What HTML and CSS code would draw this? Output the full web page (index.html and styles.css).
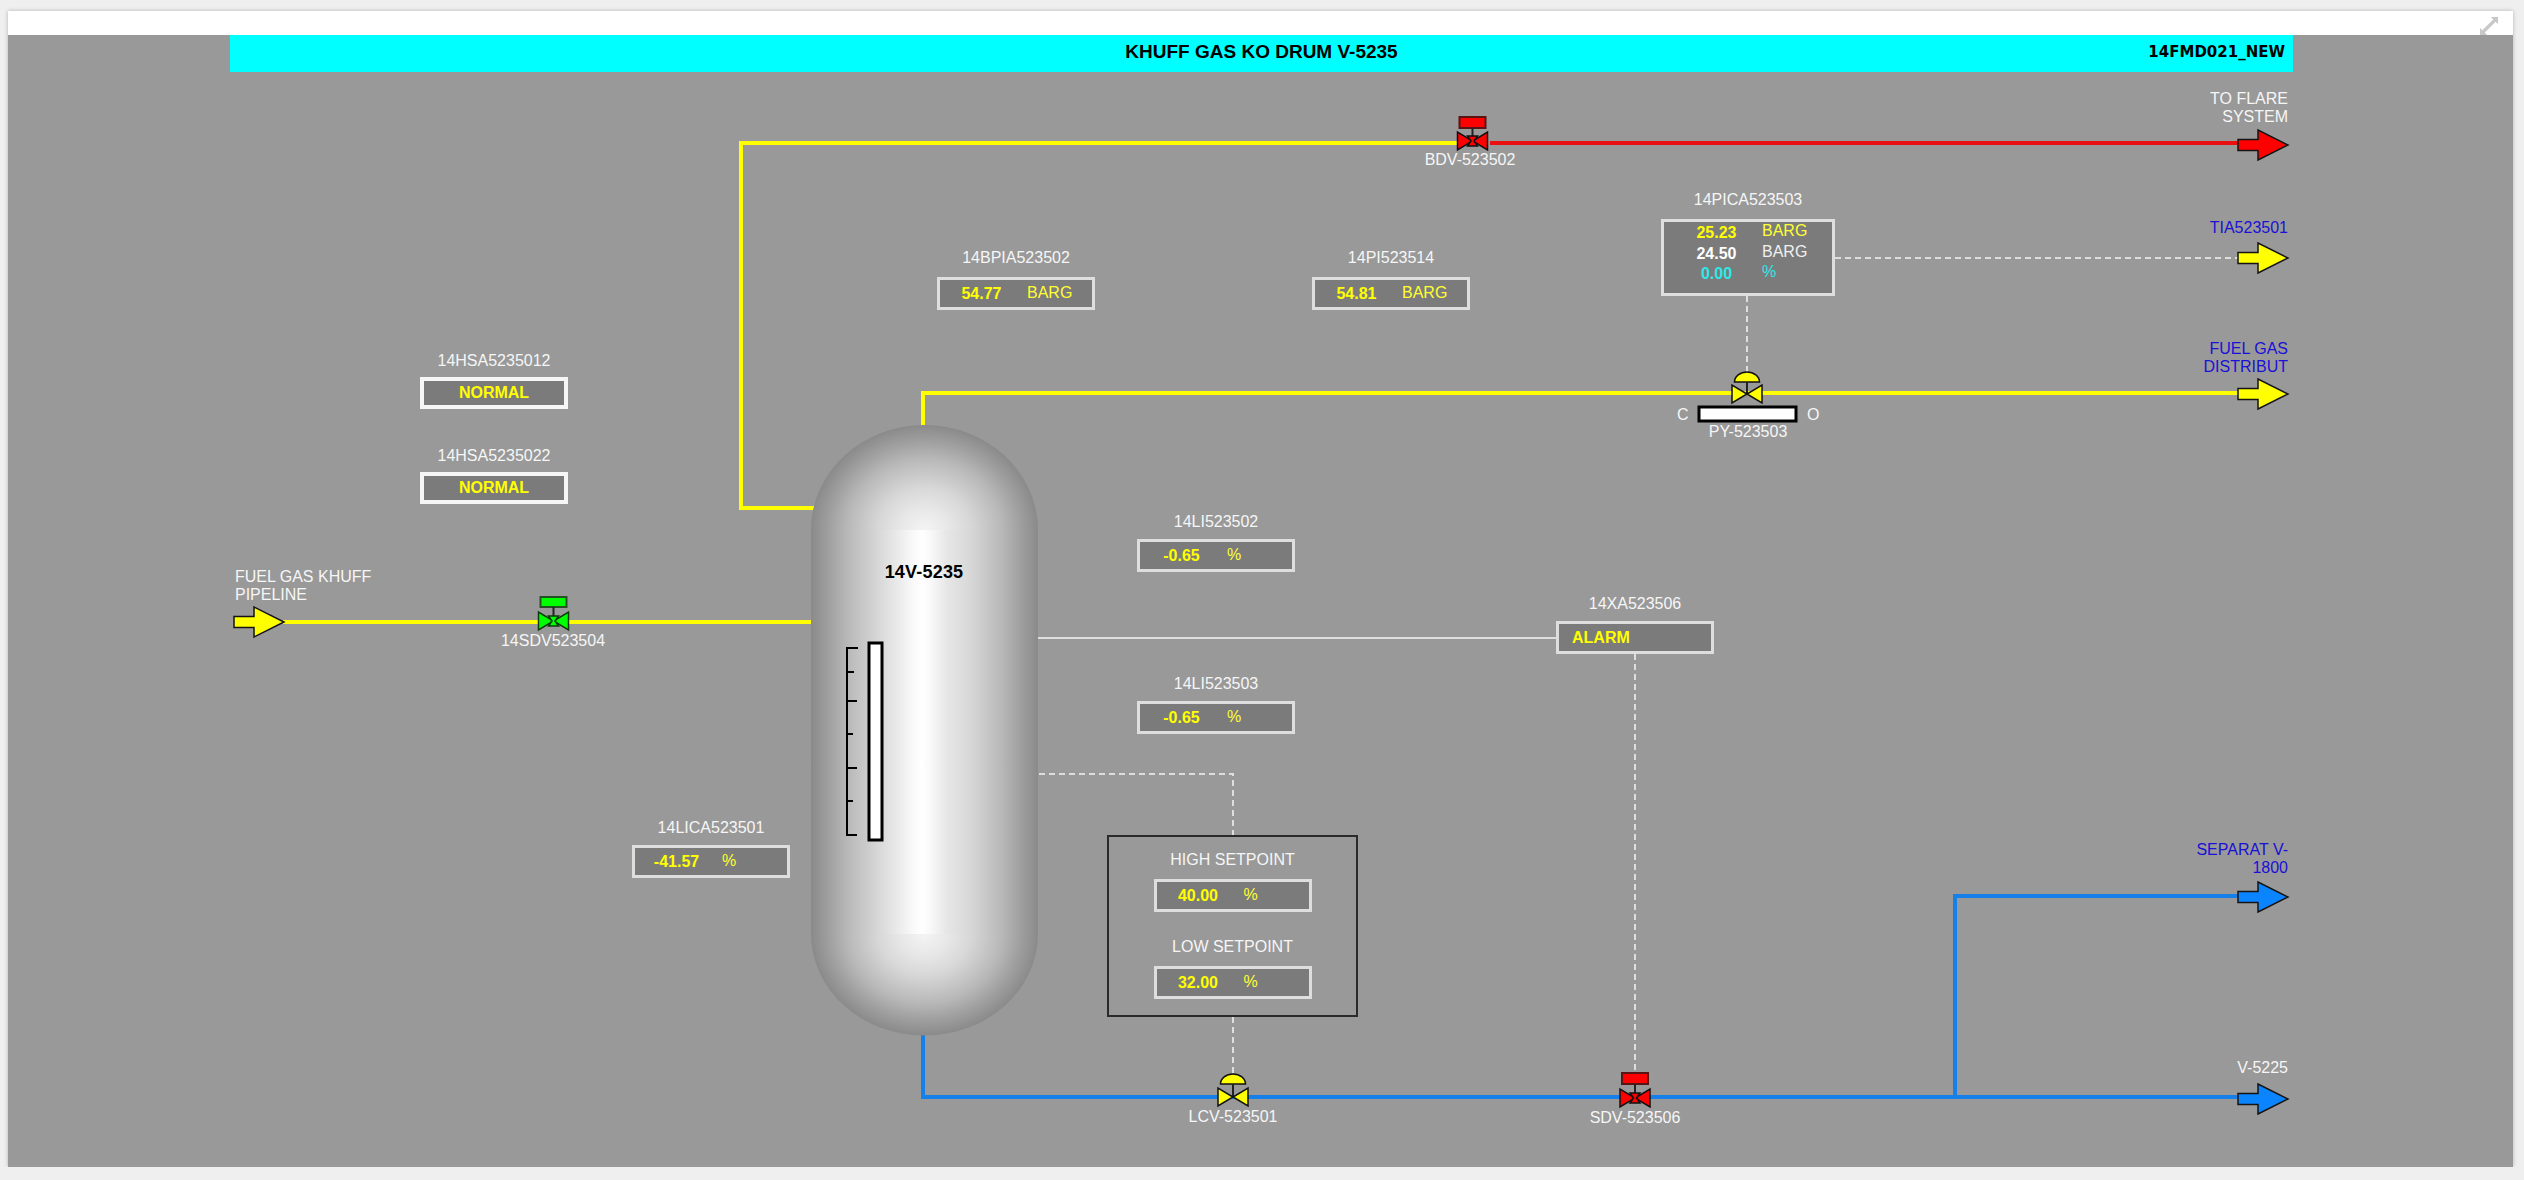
FILE: index.html
```html
<!DOCTYPE html>
<html lang="en">
<head>
  <meta charset="UTF-8">
  <title>KHUFF GAS KO DRUM V-5235</title>
  <link rel="stylesheet" href="styles.css">
</head>
<body>
  <div class="panel">
    <div class="panel-head">
      <svg class="expand-icon" width="18" height="18" viewBox="0 0 18 18">
        <path d="M11 0 H18 V7 L15.6 4.8 L4.8 15.6 L7 18 H0 V11 L2.4 13.2 L13.2 2.4 Z" fill="#c8c8c8"/>
      </svg>
    </div>

    <div class="canvas">
      <div class="banner">
        <span></span>
        <span class="banner-title">KHUFF GAS KO DRUM V-5235</span>
        <span class="banner-id">14FMD021_NEW</span>
      </div>

      <!-- pipes, vessel and valves, drawn in page coordinates -->
      <svg class="schematic" width="2505" height="1132" viewBox="8 35 2505 1132">
        <defs>
          <linearGradient id="shell">
            <stop offset="0" stop-color="#8a8a8a"/>
            <stop offset="0.08" stop-color="#a0a0a0"/>
            <stop offset="0.16" stop-color="#b8b8b8"/>
            <stop offset="0.3" stop-color="#d8d8d8"/>
            <stop offset="0.4" stop-color="#eeeeee"/>
            <stop offset="0.46" stop-color="#fbfbfb"/>
            <stop offset="0.49" stop-color="#ffffff"/>
            <stop offset="0.53" stop-color="#f8f8f8"/>
            <stop offset="0.6" stop-color="#e6e6e6"/>
            <stop offset="0.7" stop-color="#d8d8d8"/>
            <stop offset="0.84" stop-color="#b8b8b8"/>
            <stop offset="0.92" stop-color="#a0a0a0"/>
            <stop offset="1" stop-color="#8a8a8a"/>
          </linearGradient>
          <radialGradient id="cap">
            <stop offset="0" stop-color="#f4f4f4"/>
            <stop offset="0.2" stop-color="#e8e8e8"/>
            <stop offset="0.4" stop-color="#d8d8d8"/>
            <stop offset="0.68" stop-color="#b8b8b8"/>
            <stop offset="0.84" stop-color="#a0a0a0"/>
            <stop offset="1" stop-color="#8a8a8a"/>
          </radialGradient>
          <polygon id="arrow" points="-50,-5.5 -30,-5.5 -30,-15 0,0 -30,15 -30,5.5 -50,5.5"/>
          <g id="body">
            <polygon points="-15,-9 -15,9 0,0"/>
            <polygon points="15,-9 15,9 0,0"/>
          </g>
          <polygon id="plug" points="-5,-5 5,-5 1.5,0 5,5 -5,5 -1.5,0"/>
        </defs>

        <!-- pipes -->
        <g class="pipe pipe-yellow">
          <path d="M815 508 H741 V143 H1457"/>
          <path d="M923 425 V393 H2240"/>
          <path d="M283 622 H811"/>
        </g>
        <path class="pipe pipe-red" d="M1490 143 H2240"/>
        <g class="pipe pipe-blue">
          <path d="M923 1035 V1097 H2240"/>
          <path d="M1955 1097 V896 H2240"/>
        </g>

        <!-- signal lines -->
        <path class="signal" d="M1038 638 H1556"/>
        <g class="signal signal-dash">
          <path d="M1835 258 H2238"/>
          <path d="M1747 296 V372"/>
          <path d="M1039 774 H1233 V835"/>
          <path d="M1233 1017 V1074"/>
          <path d="M1635 654 V1072"/>
        </g>

        <!-- vessel -->
        <ellipse cx="924.5" cy="530" rx="113.5" ry="105" fill="url(#cap)"/>
        <ellipse cx="924.5" cy="934" rx="113.5" ry="101.5" fill="url(#cap)"/>
        <rect x="811" y="530" width="227" height="404" fill="url(#shell)"/>

        <!-- level gauge -->
        <path class="gauge" d="M858 648 H847 V835 H857 M847 672 H854 M847 701 H857 M847 734 H853 M847 768 H857 M847 801 H853"/>
        <rect class="gauge-bar" x="869" y="643" width="13" height="197"/>

        <!-- end arrows -->
        <use href="#arrow" class="arrow arrow-red" x="2288" y="145"/>
        <use href="#arrow" class="arrow arrow-yellow" x="2288" y="258"/>
        <use href="#arrow" class="arrow arrow-yellow" x="2288" y="394"/>
        <use href="#arrow" class="arrow arrow-blue" x="2288" y="897"/>
        <use href="#arrow" class="arrow arrow-blue" x="2288" y="1099"/>
        <use href="#arrow" class="arrow arrow-yellow" x="284" y="622"/>

        <!-- on/off valves -->
        <g class="valve valve-red" transform="translate(1472.5 141)">
          <rect class="actuator" x="-13" y="-24" width="26" height="11"/>
          <path class="stem" d="M0 -13 V0"/>
          <use href="#body"/>
          <use href="#plug"/>
        </g>
        <g class="valve valve-red" transform="translate(1635 1098)">
          <rect class="actuator" x="-13" y="-25" width="26" height="11"/>
          <path class="stem" d="M0 -14 V0"/>
          <use href="#body"/>
          <use href="#plug"/>
        </g>
        <g class="valve valve-green" transform="translate(553.5 621)">
          <rect class="actuator" x="-13" y="-24" width="26" height="10"/>
          <path class="stem" d="M0 -14 V0"/>
          <use href="#body"/>
          <use href="#plug"/>
        </g>

        <!-- control valves -->
        <g class="valve valve-yellow" transform="translate(1747 394)">
          <path d="M-12.5 -12 A12.5 10 0 0 1 12.5 -12 Z"/>
          <path class="stem" d="M0 -12 V0"/>
          <use href="#body"/>
        </g>
        <g class="valve valve-yellow" transform="translate(1233 1097)">
          <path d="M-12.5 -13 A12.5 10 0 0 1 12.5 -13 Z"/>
          <path class="stem" d="M0 -13 V0"/>
          <use href="#body"/>
        </g>

        <!-- PY position bar -->
        <rect class="gauge-bar" x="1699" y="407" width="97" height="14"/>
      </svg>

      <!-- free text on the schematic -->
      <div class="note note-right note-flare">TO FLARE<br>SYSTEM</div>
      <div class="note note-right note-blue note-tia">TIA523501</div>
      <div class="note note-right note-blue note-fuel">FUEL GAS<br>DISTRIBUT</div>
      <div class="note note-right note-blue note-sep">SEPARAT V-<br>1800</div>
      <div class="note note-right note-v5225">V-5225</div>
      <div class="note note-khuff">FUEL GAS KHUFF<br>PIPELINE</div>
      <div class="note note-center note-bdv">BDV-523502</div>
      <div class="note note-center note-py">PY-523503</div>
      <div class="note note-c">C</div>
      <div class="note note-o">O</div>
      <div class="note note-center note-lcv">LCV-523501</div>
      <div class="note note-center note-sdv">SDV-523506</div>
      <div class="note note-center note-sdv14">14SDV523504</div>
      <div class="note note-center note-vessel">14V-5235</div>

      <!-- readouts -->
      <div class="tag tag-bpia">
        <div class="tag-label">14BPIA523502</div>
        <div class="readout"><span class="val">54.77</span><span class="unit">BARG</span></div>
      </div>
      <div class="tag tag-pi">
        <div class="tag-label">14PI523514</div>
        <div class="readout"><span class="val">54.81</span><span class="unit">BARG</span></div>
      </div>
      <div class="tag tag-pica">
        <div class="tag-label">14PICA523503</div>
        <div class="readout-multi">
          <span class="val">25.23</span><span class="unit">BARG</span>
          <span class="val val-white">24.50</span><span class="unit unit-white">BARG</span>
          <span class="val val-cyan">0.00</span><span class="unit unit-cyan">%</span>
        </div>
      </div>
      <div class="tag tag-hsa1">
        <div class="tag-label">14HSA5235012</div>
        <div class="status">NORMAL</div>
      </div>
      <div class="tag tag-hsa2">
        <div class="tag-label">14HSA5235022</div>
        <div class="status">NORMAL</div>
      </div>
      <div class="tag tag-li2">
        <div class="tag-label">14LI523502</div>
        <div class="readout"><span class="val">-0.65</span><span class="unit">%</span></div>
      </div>
      <div class="tag tag-li3">
        <div class="tag-label">14LI523503</div>
        <div class="readout"><span class="val">-0.65</span><span class="unit">%</span></div>
      </div>
      <div class="tag tag-lica">
        <div class="tag-label">14LICA523501</div>
        <div class="readout"><span class="val">-41.57</span><span class="unit">%</span></div>
      </div>
      <div class="tag tag-xa">
        <div class="tag-label">14XA523506</div>
        <div class="readout readout-alarm"><span class="val">ALARM</span></div>
      </div>

      <div class="setpoints">
        <div class="tag-flow">
          <div class="tag-label">HIGH SETPOINT</div>
          <div class="readout"><span class="val">40.00</span><span class="unit">%</span></div>
        </div>
        <div class="tag-flow">
          <div class="tag-label">LOW SETPOINT</div>
          <div class="readout"><span class="val">32.00</span><span class="unit">%</span></div>
        </div>
      </div>
    </div>
  </div>
</body>
</html>
```

FILE: styles.css
```css
body {
  margin: 0;
  background-color: #efefef;
  font-family: "Liberation Sans", Arial, sans-serif;
  font-size: 16px;
  line-height: 18px;
  color: #f6f6f6;
}

.panel {
  width: 2505px;
  margin: 11px 0 0 8px;
  background-color: #fff;
  box-shadow: 0 0 4px rgba(0, 0, 0, 0.25);
}

.panel-head {
  height: 24px;
  display: flex;
  justify-content: flex-end;
  align-items: flex-end;
  padding-right: 15px;
}

.expand-icon {
  display: block;
}

.canvas {
  position: relative;
  height: 1132px;
  background-color: #999;
  overflow: hidden;
}

.banner {
  position: relative;
  z-index: 1;
  width: 2063px;
  height: 37px;
  box-sizing: border-box;
  padding-bottom: 3px;
  margin-left: 222px;
  background-color: #0ff;
  color: #000;
  font-weight: bold;
  display: grid;
  grid-template-columns: 1fr auto 1fr;
  align-items: center;
}

.banner-title {
  font-size: 19px;
}

.banner-id {
  justify-self: end;
  margin-right: 8px;
  font-family: "DejaVu Sans", sans-serif;
  font-size: 15px;
}

.schematic {
  position: absolute;
  top: 0;
  left: 0;
}

/* pipes */
.pipe {
  fill: none;
  stroke-width: 4;
}

.pipe-yellow { stroke: #ffff00; }
.pipe-red { stroke: #e81010; }
.pipe-blue { stroke: #1680ea; }

.signal {
  fill: none;
  stroke: #dedede;
  stroke-width: 2;
}

.signal-dash {
  stroke-dasharray: 6 4;
}

.gauge {
  fill: none;
  stroke: #000;
  stroke-width: 2;
}

.gauge-bar {
  fill: #fff;
  stroke: #000;
  stroke-width: 3;
}

.arrow {
  stroke: #141414;
  stroke-width: 1.5;
}

.arrow-red { fill: #ff0000; }
.arrow-yellow { fill: #ffff00; }
.arrow-blue { fill: #0a85ff; }

.valve {
  stroke: #111;
  stroke-width: 1.5;
}

.valve-red { fill: #ff0000; }
.valve-green { fill: #00ff00; }
.valve-yellow { fill: #ffff00; }

.valve-red .actuator { stroke: #5a1414; stroke-width: 2; }
.valve-green .actuator { stroke: #245224; stroke-width: 2; }
.valve-green { stroke: #0c3c0c; }

.stem {
  fill: none;
  stroke: #222;
  stroke-width: 2;
}

/* free text */
.note {
  position: absolute;
  white-space: nowrap;
}

.note-right { right: 225px; text-align: right; }
.note-center { width: 120px; text-align: center; }
.note-blue { color: #1a10d6; }

.note-flare { top: 55px; }
.note-tia { top: 184px; }
.note-fuel { top: 305px; }
.note-sep { top: 806px; }
.note-v5225 { top: 1024px; }
.note-khuff { left: 227px; top: 533px; }
.note-bdv { left: 1402px; top: 116px; }
.note-py { left: 1680px; top: 388px; }
.note-c { left: 1669px; top: 371px; }
.note-o { left: 1799px; top: 371px; }
.note-lcv { left: 1165px; top: 1073px; }
.note-sdv { left: 1567px; top: 1074px; }
.note-sdv14 { left: 485px; top: 597px; }

.note-vessel {
  left: 856px;
  top: 528px;
  color: #000;
  font-size: 18px;
  font-weight: bold;
  letter-spacing: 0.2px;
}

/* readouts */
.tag {
  position: absolute;
  display: flex;
  flex-direction: column;
  align-items: center;
  gap: 10px;
}

.tag-flow {
  display: flex;
  flex-direction: column;
  align-items: center;
  gap: 10px;
}

.tag-bpia { left: 929px; top: 214px; }
.tag-pi { left: 1304px; top: 214px; }
.tag-pica { left: 1653px; top: 156px; }
.tag-hsa1 { left: 412px; top: 317px; gap: 7px; }
.tag-hsa2 { left: 412px; top: 412px; gap: 7px; }
.tag-li2 { left: 1129px; top: 478px; gap: 8px; }
.tag-li3 { left: 1129px; top: 640px; gap: 8px; }
.tag-lica { left: 624px; top: 784px; gap: 8px; }
.tag-xa { left: 1548px; top: 560px; gap: 8px; }

.readout {
  width: 158px;
  height: 33px;
  box-sizing: border-box;
  border: 3px solid #dedede;
  background-color: #7b7b7b;
  display: flex;
  align-items: center;
}

.readout .val {
  width: 83px;
  text-align: center;
}

.readout .unit {
  margin-left: 4px;
  position: relative;
  top: -1px;
}

.readout-alarm {
  padding-left: 13px;
}

.readout-alarm .val {
  width: auto;
}

.readout-multi {
  width: 174px;
  height: 77px;
  box-sizing: border-box;
  border: 3px solid #dedede;
  background-color: #7b7b7b;
  padding: 1px 0 0 7px;
  display: grid;
  grid-template-columns: 91px auto;
  grid-auto-rows: 20.5px;
  align-items: center;
  justify-content: start;
}

.readout-multi .val {
  text-align: center;
}

.readout-multi .unit {
  position: relative;
  top: -2px;
}

.val {
  color: #ffff00;
  font-weight: bold;
}

.unit {
  color: #ffff33;
}

.val-white { color: #fff; }
.unit-white { color: #f0f0f0; }
.val-cyan { color: #2ee8e8; }
.unit-cyan { color: #2ee8e8; }

.status {
  width: 148px;
  height: 32px;
  box-sizing: border-box;
  border: 4px solid #f6f6f6;
  background-color: #7b7b7b;
  color: #ffff00;
  font-weight: bold;
  display: flex;
  justify-content: center;
  align-items: center;
}

.setpoints {
  position: absolute;
  left: 1099px;
  top: 800px;
  width: 251px;
  height: 182px;
  box-sizing: border-box;
  border: 2px solid #2a2a2a;
  background-color: #999;
  padding-top: 14px;
  display: flex;
  flex-direction: column;
  align-items: center;
  gap: 26px;
}
```
